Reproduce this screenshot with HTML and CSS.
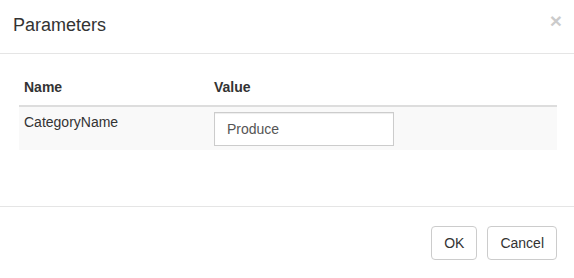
FILE: index.html
```html
<!DOCTYPE html>
<html>
<head>
<meta charset="utf-8">
<link rel="stylesheet" href="styles.css">
</head>
<body>
<div class="modal">
  <div class="modal-header">
    <h4 class="modal-title">Parameters</h4>
    <button class="close" type="button">&times;</button>
  </div>
  <div class="modal-body">
    <table class="params">
      <thead>
        <tr><th class="col-name">Name</th><th>Value</th></tr>
      </thead>
      <tbody>
        <tr>
          <td class="col-name">CategoryName</td>
          <td><input class="form-control" type="text" value="Produce"></td>
        </tr>
      </tbody>
    </table>
  </div>
  <div class="modal-footer">
    <button class="btn" type="button">OK</button>
    <button class="btn" type="button">Cancel</button>
  </div>
</div>
</body>
</html>
```
FILE: styles.css
```css
* { box-sizing: border-box; }
html, body {
  margin: 0;
  padding: 0;
  background: #fff;
}
body {
  font-family: "Liberation Sans", Arial, sans-serif;
  font-size: 14px;
  line-height: 20px;
  color: #333;
}
.modal {
  width: 574px;
  height: 278px;
  display: flex;
  flex-direction: column;
}
.modal-header {
  display: flex;
  justify-content: space-between;
  align-items: flex-start;
  padding: 12px 12px 15px 13px;
  border-bottom: 1px solid #e5e5e5;
  height: 54px;
}
.modal-title {
  margin: 0;
  font-size: 18px;
  font-weight: normal;
  line-height: 26px;
}
.close {
  border: 0;
  background: transparent;
  padding: 0;
  margin-top: -2px;
  font-family: "Liberation Sans", Arial, sans-serif;
  font-size: 21px;
  font-weight: bold;
  line-height: 1;
  color: #000;
  opacity: 0.2;
  cursor: pointer;
}
.modal-body {
  flex: 1;
  padding: 15px 17px 0 19px;
}
.params {
  width: 100%;
  border-collapse: collapse;
  border-spacing: 0;
}
.params th {
  text-align: left;
  font-weight: bold;
  padding: 8px 5px 8px;
  border-bottom: 2px solid #ddd;
  vertical-align: bottom;
}
.params .col-name {
  width: 190px;
}
.params td {
  padding: 5px 5px 4px 5px;
  background: #f9f9f9;
  vertical-align: top;
}
.form-control {
  display: block;
  width: 180px;
  height: 34px;
  padding: 6px 12px;
  font-family: "Liberation Sans", Arial, sans-serif;
  font-size: 14px;
  color: #555;
  background: #fff;
  border: 1px solid #ccc;
  border-radius: 0;
  box-shadow: inset 0 1px 1px rgba(0,0,0,0.075);
}
.modal-footer {
  display: flex;
  justify-content: flex-end;
  gap: 10px;
  padding: 19px 17px 18px;
  border-top: 1px solid #e5e5e5;
}
.btn {
  height: 34px;
  padding: 6px 12px;
  font-family: "Liberation Sans", Arial, sans-serif;
  font-size: 14px;
  line-height: 20px;
  color: #333;
  background: #fff;
  border: 1px solid #ccc;
  border-radius: 4px;
}
```
